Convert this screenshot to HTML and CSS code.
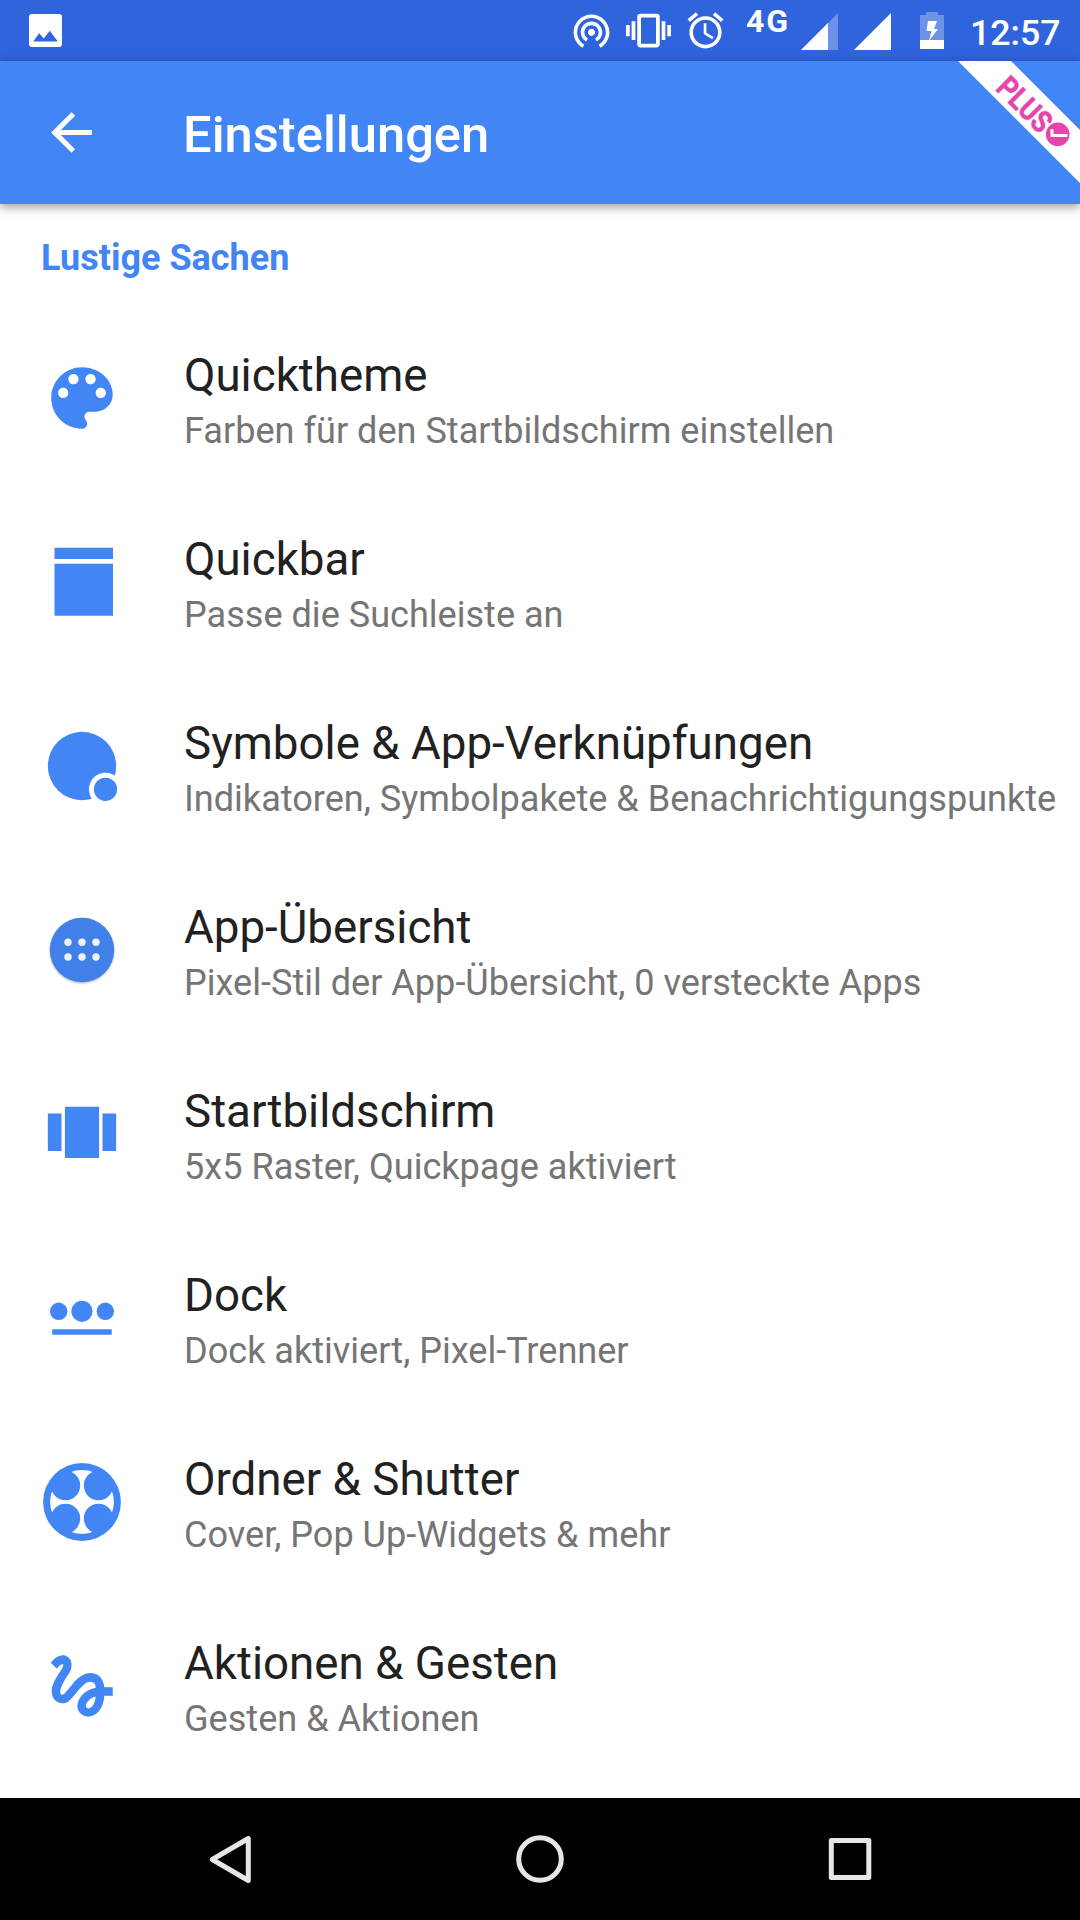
FILE: index.html
```
<!DOCTYPE html>
<html lang="de">

<head>
	<meta charset="utf-8">
	<title>Einstellungen</title>
	<meta name="viewport" content="width=device-width, initial-scale=1">
	<link rel="stylesheet" href="styles.css">
</head>

<body>
	<div class="status">
		<svg class="status__photo" viewBox="0 0 33 33">
			<path fill-rule="evenodd" d="M3 0h27a3 3 0 0 1 3 3v27a3 3 0 0 1-3 3H3a3 3 0 0 1-3-3V3a3 3 0 0 1 3-3zM4.200 27.400h24.600L20.800 16.800 14.800 24.600 10.200 19.200z" />
		</svg>
		<svg class="status__hotspot" viewBox="0 0 24 24">
			<path d="M12 11c-1.100 0-2 .9-2 2s.9 2 2 2 2-.9 2-2-.9-2-2-2zm6 2c0-3.310-2.690-6-6-6s-6 2.690-6 6c0 2.220 1.210 4.150 3 5.190l1-1.740c-1.190-.7-2-1.970-2-3.450 0-2.210 1.790-4 4-4s4 1.790 4 4c0 1.480-.81 2.750-2 3.450l1 1.740c1.790-1.040 3-2.970 3-5.190zM12 3C6.480 3 2 7.480 2 13c0 3.700 2.010 6.920 4.990 8.650l1-1.730C5.610 18.530 4 15.960 4 13c0-4.420 3.580-8 8-8s8 3.580 8 8c0 2.960-1.610 5.530-4 6.920l1 1.730c2.990-1.730 5-4.950 5-8.650 0-5.520-4.480-10-10-10z" />
		</svg>
		<svg class="status__vibrate" viewBox="0 0 24 24">
			<path d="M0 15h2V9H0v6zm3 2h2V7H3v10zm19-8v6h2V9h-2zm-3 8h2V7h-2v10zM16.500 3h-9C6.670 3 6 3.670 6 4.500v15c0 .83.67 1.500 1.500 1.500h9c.83 0 1.500-.67 1.500-1.500v-15c0-.83-.67-1.500-1.500-1.500zM16 19H8V5h8v14z" />
		</svg>
		<svg class="status__alarm" viewBox="0 0 24 24">
			<path d="M22 5.720l-4.600-3.860-1.290 1.530 4.600 3.860L22 5.720zM7.880 3.390L6.600 1.860 2 5.710l1.290 1.530 4.590-3.850zM12.500 8H11v6l4.750 2.850.75-1.230-4-2.370V8zM12 4c-4.970 0-9 4.030-9 9s4.020 9 9 9c4.970 0 9-4.030 9-9s-4.030-9-9-9zm0 16c-3.870 0-7-3.130-7-7s3.130-7 7-7 7 3.130 7 7-3.130 7-7 7z" />
		</svg>
		<span class="status__network">4G</span>
		<svg class="status__signal" viewBox="0 0 37 37">
			<path opacity=".3" d="M37 0v37H0z" />
			<path d="M27 10v27H0z" />
		</svg>
		<svg class="status__signal status__signal--full" viewBox="0 0 37 37">
			<path d="M37 0v37H0z" />
		</svg>
		<svg class="status__battery" viewBox="0 0 24 37">
			<path opacity=".3" d="M6 0h12v3h6v25H0V3h6z" />
			<path d="M0 28h24v9H0zM8 9h9l-3 8h4L9 29l2.500-10H6.500z" />
		</svg>
		<span class="status__clock">12:57</span>
	</div>

	<header class="bar">
		<svg class="bar__back" viewBox="0 0 24 24">
			<path d="M20 11H7.830l5.590-5.590L12 4l-8 8 8 8 1.410-1.410L7.830 13H20v-2z" />
		</svg>
		<h1 class="bar__hed">Einstellungen</h1>
		<svg class="bar__ribbon" viewBox="0 0 122 122">
			<path fill="#fff" d="M0 0h53l69 69v53z" />
			<text class="ribbon__text" transform="translate(36.500 28.300) rotate(45)" textLength="64" lengthAdjust="spacingAndGlyphs">PLUS</text>
			<circle cx="99.700" cy="73.300" r="11.800" fill="#e645ab" />
			<path fill="none" stroke="#fff" stroke-width="3" d="M94 68v6.600h15.500" />
		</svg>
	</header>

	<main class="settings">
		<h2 class="settings__hed">Lustige Sachen</h2>

		<div class="item">
			<svg class="item__icon" viewBox="0 0 24 24">
				<path d="M12 3c-4.970 0-9 4.030-9 9s4.030 9 9 9c.83 0 1.500-.67 1.500-1.500 0-.39-.15-.74-.39-1.010-.23-.26-.38-.61-.38-.99 0-.83.67-1.500 1.500-1.500H16c2.760 0 5-2.240 5-5 0-4.420-4.030-8-9-8zm-5.500 9c-.83 0-1.500-.67-1.500-1.500S5.670 9 6.500 9 8 9.670 8 10.500 7.330 12 6.500 12zm3-4C8.670 8 8 7.330 8 6.500S8.670 5 9.500 5s1.500.67 1.500 1.500S10.330 8 9.500 8zm5 0c-.83 0-1.500-.67-1.500-1.500S13.670 5 14.500 5s1.500.67 1.500 1.500S15.330 8 14.500 8zm3 4c-.83 0-1.500-.67-1.500-1.500S16.670 9 17.500 9s1.500.67 1.500 1.500-.67 1.500-1.500 1.500z" />
			</svg>
			<div class="item__text">
				<h3 class="item__title">Quicktheme</h3>
				<p class="item__dek">Farben für den Startbildschirm einstellen</p>
			</div>
		</div>

		<div class="item">
			<svg class="item__icon" viewBox="0 0 82 82">
				<path d="M13.500 6.700h58.500v11.300H13.500zM13.500 22.700h58.500v52H13.500z" />
			</svg>
			<div class="item__text">
				<h3 class="item__title">Quickbar</h3>
				<p class="item__dek">Passe die Suchleiste an</p>
			</div>
		</div>

		<div class="item">
			<svg class="item__icon" viewBox="0 0 82 82">
				<circle cx="41" cy="41" r="34.200" />
				<circle cx="64.500" cy="64.300" r="16.600" fill="#fff" />
				<circle cx="64.500" cy="64.300" r="11.600" />
			</svg>
			<div class="item__text">
				<h3 class="item__title">Symbole &amp; App-Verknüpfungen</h3>
				<p class="item__dek">Indikatoren, Symbolpakete &amp; Benachrichtigungspunkte</p>
			</div>
		</div>

		<div class="item">
			<svg class="item__icon item__icon--apps" viewBox="0 0 82 82">
				<circle cx="41" cy="41" r="32.200" />
				<g fill="#f1f1f1">
					<circle cx="27" cy="33.300" r="3.700" />
					<circle cx="41" cy="33.300" r="3.700" />
					<circle cx="55" cy="33.300" r="3.700" />
					<circle cx="27" cy="48" r="3.700" />
					<circle cx="41" cy="48" r="3.700" />
					<circle cx="55" cy="48" r="3.700" />
				</g>
			</svg>
			<div class="item__text">
				<h3 class="item__title">App-Übersicht</h3>
				<p class="item__dek">Pixel-Stil der App-Übersicht, 0 versteckte Apps</p>
			</div>
		</div>

		<div class="item">
			<svg class="item__icon" viewBox="0 0 24 24">
				<path d="M7 19h10V4H7v15zm-5-2h4V6H2v11zM18 6v11h4V6h-4z" />
			</svg>
			<div class="item__text">
				<h3 class="item__title">Startbildschirm</h3>
				<p class="item__dek">5x5 Raster, Quickpage aktiviert</p>
			</div>
		</div>

		<div class="item">
			<svg class="item__icon" viewBox="0 0 82 82">
				<circle cx="17.700" cy="34.300" r="8.700" />
				<circle cx="41" cy="34.300" r="10.600" />
				<circle cx="64.300" cy="34.300" r="8.700" />
				<path d="M11.200 52.300h59.500v5.500H11.200z" />
			</svg>
			<div class="item__text">
				<h3 class="item__title">Dock</h3>
				<p class="item__dek">Dock aktiviert, Pixel-Trenner</p>
			</div>
		</div>

		<div class="item">
			<svg class="item__icon" viewBox="0 0 82 82">
				<circle cx="41" cy="41" r="38.900" />
				<circle cx="41" cy="41" r="31.900" fill="#fff" />
				<circle cx="24.500" cy="24.500" r="14.700" />
				<circle cx="57.500" cy="24.500" r="14.700" />
				<circle cx="24.500" cy="57.500" r="14.700" />
				<circle cx="57.500" cy="57.500" r="14.700" />
			</svg>
			<div class="item__text">
				<h3 class="item__title">Ordner &amp; Shutter</h3>
				<p class="item__dek">Cover, Pop Up-Widgets &amp; mehr</p>
			</div>
		</div>

		<div class="item">
			<svg class="item__icon" viewBox="0 0 24 24">
				<path d="M4.590 6.890c.7-.71 1.400-1.350 1.710-1.220.5.2 0 1.030-.3 1.520-.25.42-2.860 3.890-2.860 6.310 0 1.280.48 2.340 1.340 2.980.75.56 1.740.73 2.640.46 1.070-.31 1.950-1.400 3.060-2.770 1.210-1.490 2.830-3.440 4.080-3.440 1.630 0 1.650 1.010 1.760 1.790-3.780.64-5.380 3.670-5.380 5.370 0 1.700 1.440 3.090 3.210 3.090 1.630 0 4.290-1.330 4.690-6.100H21v-2.500h-2.470c-.15-1.650-1.090-4.200-4.030-4.200-2.250 0-4.180 1.910-4.940 2.840-.58.73-2.060 2.480-2.290 2.720-.25.3-.68.84-1.110.84-.45 0-.72-.83-.36-1.920.35-1.090 1.400-2.860 1.850-3.520.78-1.140 1.300-1.920 1.300-3.280C8.950 3.690 7.310 3 6.440 3 5.120 3 3.970 4 3.720 4.250c-.36.36-.66.66-.88.93l1.750 1.710zm9.290 11.660c-.31 0-.74-.26-.74-.72 0-.6.73-2.200 2.870-2.760-.3 2.690-1.430 3.480-2.130 3.480z" />
			</svg>
			<div class="item__text">
				<h3 class="item__title">Aktionen &amp; Gesten</h3>
				<p class="item__dek">Gesten &amp; Aktionen</p>
			</div>
		</div>
	</main>

	<nav class="nav">
		<svg class="nav__icon" viewBox="0 0 60 60">
			<path d="M48.300 9.500v42L12.300 30.500z" />
		</svg>
		<svg class="nav__icon" viewBox="0 0 60 60">
			<circle cx="30" cy="30" r="21.300" />
		</svg>
		<svg class="nav__icon" viewBox="0 0 60 60">
			<rect x="11.300" y="11.500" width="37.500" height="37" />
		</svg>
	</nav>
</body>

</html>
```

FILE: styles.css
```
* {
	box-sizing: border-box;
}

html,
body {
	margin: 0;
	padding: 0;
	font-family: Roboto, 'Liberation Sans', sans-serif;
}

body {
	display: flex;
	flex-direction: column;
	width: 1080px;
	height: 1920px;
	overflow: hidden;
	background: #fff;
	color: #212121;
}

h1,
h2,
h3,
p {
	margin: 0;
	font-weight: 400;
	white-space: nowrap;
}

svg {
	display: block;
	flex: none;
}

/* status bar */

.status {
	display: flex;
	align-items: center;
	flex: none;
	height: 61px;
	padding-left: 29px;
	background: #3064dd;
	color: #fff;
	fill: #fff;
}

.status__photo {
	width: 33px;
	height: 33px;
}

.status__hotspot {
	width: 43px;
	height: 43px;
	margin-left: 508px;
}

.status__vibrate {
	width: 45px;
	height: 45px;
	margin-left: 13px;
}

.status__alarm {
	width: 43px;
	height: 43px;
	margin-left: 13px;
}

.status__network {
	align-self: flex-start;
	width: 55px;
	margin-left: 19px;
	font-size: 32px;
	font-weight: 700;
	line-height: 43px;
	letter-spacing: 2px;
}

.status__signal {
	width: 37px;
	height: 37px;
	margin-top: 1px;
}

.status__signal--full {
	margin-left: 16px;
}

.status__battery {
	width: 24px;
	height: 37px;
	margin-left: 29px;
}

.status__clock {
	margin-left: 26px;
	font-size: 35.7px;
	font-weight: 500;
	line-height: 61px;
	padding-top: 5px;
}

/* app bar */

.bar {
	position: relative;
	display: flex;
	align-items: center;
	flex: none;
	height: 143px;
	padding-left: 41px;
	background: #4285f4;
	color: #fff;
	box-shadow: 0 3px 10px rgba(0, 0, 0, 0.4);
}

.bar__back {
	width: 61px;
	height: 61px;
	fill: #fff;
}

.bar__hed {
	margin-left: 81px;
	font-size: 50.7px;
	font-weight: 500;
	line-height: 60px;
	padding-top: 5px;
}

.bar__ribbon {
	position: absolute;
	top: 0;
	right: 0;
	width: 122px;
	height: 122px;
}

.ribbon__text {
	font-size: 30.5px;
	font-weight: 700;
	fill: #e645ab;
	stroke: #e645ab;
	stroke-width: 0.5;
}

/* list */

.settings {
	flex: 1;
}

.settings__hed {
	height: 102px;
	padding-left: 41px;
	font-size: 36px;
	font-weight: 700;
	line-height: 108px;
	color: #4285f4;
}

.item {
	display: flex;
	align-items: center;
	height: 184px;
	padding-left: 41px;
}

.item__icon {
	width: 82px;
	height: 82px;
	fill: #4285f4;
}

.item__icon--apps {
	fill: #4080e8;
	filter: drop-shadow(0 1px 1px rgba(0, 0, 0, 0.3));
}

.item__text {
	margin-left: 61px;
	padding-top: 11px;
}

.item__title {
	font-size: 45.7px;
	line-height: 56px;
}

.item__dek {
	font-size: 36.1px;
	line-height: 55px;
	color: #757575;
}

/* navigation */

.nav {
	display: flex;
	align-items: center;
	justify-content: space-between;
	flex: none;
	height: 122px;
	padding: 0 200px;
	background: #000;
}

.nav__icon {
	width: 60px;
	height: 60px;
	fill: none;
	stroke: #e6e6e6;
	stroke-width: 5;
	stroke-linejoin: round;
}
```
